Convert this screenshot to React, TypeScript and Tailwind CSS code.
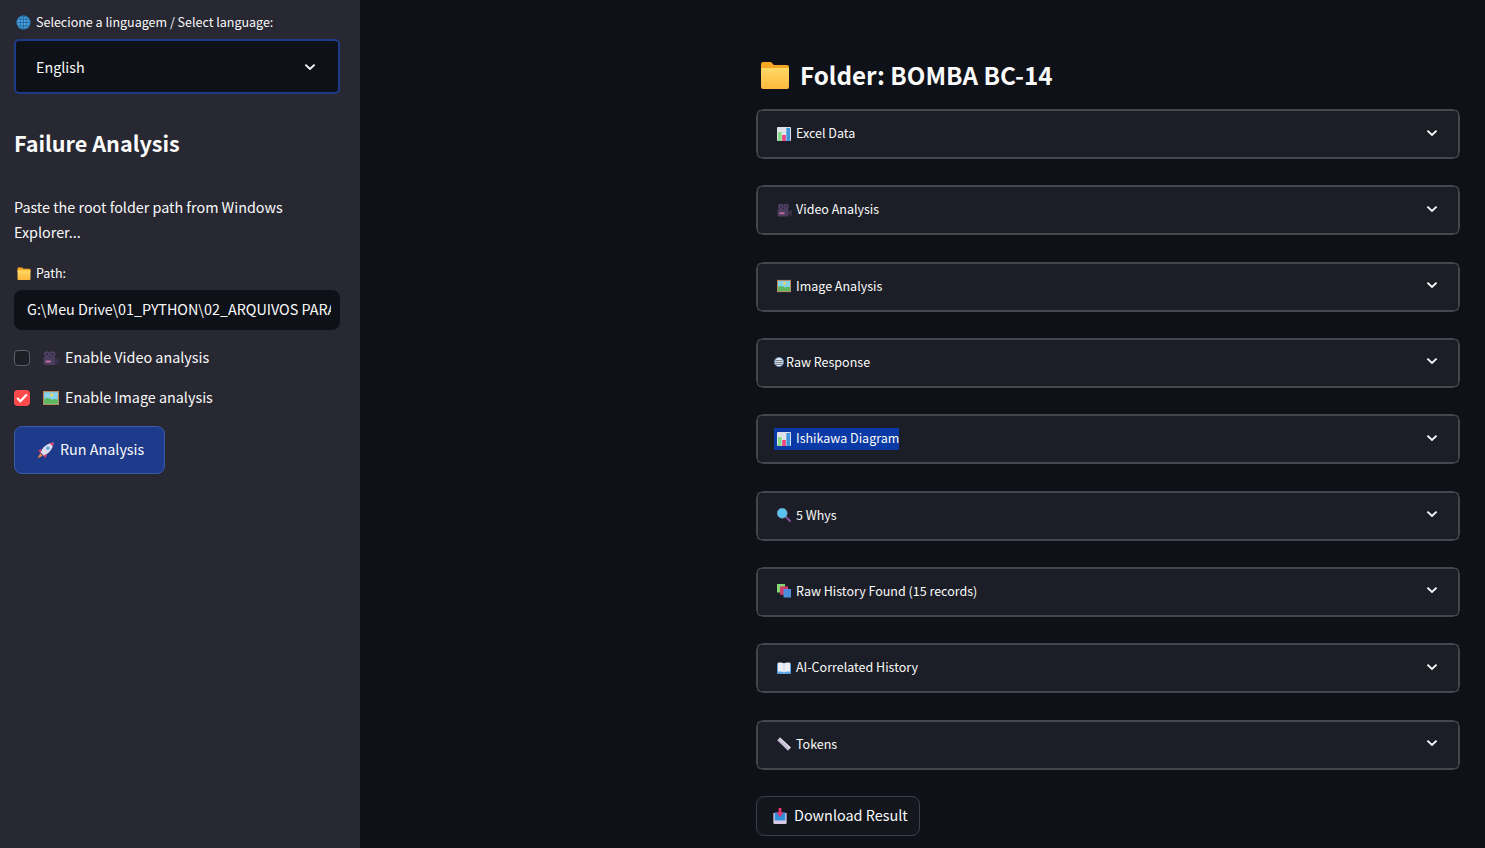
import React from "react";

type IconProps = { className?: string };

const Globe = ({ className }: IconProps) => (
  <svg viewBox="0 0 16 16" className={className}>
    <circle cx="8" cy="8" r="7.4" fill="#4aa3df" />
    <g fill="none" stroke="#1f5f93" strokeWidth="0.8">
      <circle cx="8" cy="8" r="7.2" />
      <ellipse cx="8" cy="8" rx="3.4" ry="7.2" />
      <path d="M8 1v14M1 8h14M2 4.5h12M2 11.5h12" />
    </g>
  </svg>
);

const Folder = ({ id, className }: IconProps & { id: string }) => (
  <svg viewBox="0 0 30 28" className={className}>
    <defs>
      <linearGradient id={id} x1="0" y1="0" x2="0" y2="1">
        <stop offset="0" stopColor="#ffd966" />
        <stop offset="1" stopColor="#ffb83d" />
      </linearGradient>
    </defs>
    <path d="M1 3a2 2 0 0 1 2-2h8l3 3h13a2 2 0 0 1 2 2v4H1z" fill="#f5a623" />
    <path d="M1 7h28v19a2 2 0 0 1-2 2H3a2 2 0 0 1-2-2z" fill={`url(#${id})`} />
  </svg>
);

const Chart = ({ className }: IconProps) => (
  <svg viewBox="0 0 14 14" className={className}>
    <rect x="0" y="0" width="14" height="14" rx="1" fill="#dfe2ea" />
    <rect x="1" y="5" width="3.6" height="9" fill="#84dc86" />
    <rect x="5.2" y="8" width="3.6" height="6" fill="#f0437f" />
    <rect x="9.4" y="1" width="3.6" height="13" fill="#3f95dc" />
  </svg>
);

const Camera = ({ className }: IconProps) => (
  <svg viewBox="0 0 15 14" className={className}>
    <circle cx="3.8" cy="3.4" r="2.7" fill="#4f4165" />
    <circle cx="9" cy="3.4" r="2.7" fill="#4f4165" />
    <circle cx="3.8" cy="3.4" r="1" fill="#2f2740" />
    <circle cx="9" cy="3.4" r="1" fill="#2f2740" />
    <rect x="0.6" y="6" width="11" height="7.6" rx="0.8" fill="#4b3d60" />
    <path d="M11.6 8.6L15 6.8v6.4l-3.4-1.8z" fill="#3a3049" />
    <rect x="2.4" y="9.4" width="5" height="1.8" fill="#c76f9a" />
  </svg>
);

const Picture = ({ className }: IconProps) => (
  <svg viewBox="0 0 16 14" className={className}>
    <rect width="16" height="14" fill="#b78a5e" />
    <rect x="1.2" y="1.2" width="13.6" height="11.6" fill="#86d3ee" />
    <circle cx="8.6" cy="4" r="1.5" fill="#f7d24c" />
    <path d="M1.2 8.5C4 6 7 7 9 9c2-1.4 4-1.4 5.8-.3v4.1H1.2z" fill="#5cb85c" />
  </svg>
);

const Rocket = ({ className }: IconProps) => (
  <svg viewBox="0 0 16 16" className={className}>
    <path d="M3 10.5L.6 15.4l4.9-2.4z" fill="#f58a3c" />
    <path d="M4 6.4L.8 8.4l3 1.6zM9.6 12L7.6 15.2 6 12.2z" fill="#e8356f" />
    <path d="M3.4 9.8C5 5 9 1.2 15.6.4 14.8 7 11 11 6.2 12.6z" fill="#dfdbea" />
    <path d="M12 1.2c1.1-.4 2.4-.6 3.6-.8-.1 1.2-.4 2.5-.8 3.6z" fill="#e8356f" />
    <circle cx="10.2" cy="5.8" r="1.7" fill="#5aa9e6" />
  </svg>
);

const Magnifier = ({ className }: IconProps) => (
  <svg viewBox="0 0 14 14" className={className}>
    <path d="M8 8l5 5" stroke="#7a4d8f" strokeWidth="2.2" strokeLinecap="round" />
    <circle cx="5.2" cy="5.2" r="5" fill="#58c4ee" />
    <circle cx="5.2" cy="5.2" r="5" fill="none" stroke="#8a8fb5" strokeWidth="0.6" />
  </svg>
);

const Books = ({ className }: IconProps) => (
  <svg viewBox="0 0 14 14" className={className}>
    <rect x="0" y="0" width="8" height="8.5" fill="#84d873" />
    <rect x="3" y="2.4" width="8" height="8.5" fill="#d13a6b" />
    <rect x="6.5" y="5" width="7.5" height="8.5" fill="#4b8fdc" />
  </svg>
);

const OpenBook = ({ className }: IconProps) => (
  <svg viewBox="0 0 14 12" className={className}>
    <rect x="0" y="1" width="14" height="11" rx="1" fill="#5a9fe0" />
    <path d="M1 0.8c2-.6 4.5-.4 6 .6 1.5-1 4-1.2 6-.6v9c-2-.5-4.5-.3-6 .6-1.5-.9-4-1.1-6-.6z" fill="#eef0f7" />
    <path d="M7 1.4v9" stroke="#a9b3cc" strokeWidth="0.6" />
  </svg>
);

const Ruler = ({ className }: IconProps) => (
  <svg viewBox="0 0 14 14" className={className}>
    <path d="M3 .4L13.8 10.6 11 13.8.2 3.2z" fill="#c9bfd6" />
    <path d="M3 .4L13.8 10.6 13 11.5 2.2 1.3z" fill="#e3dcea" />
  </svg>
);

const Inbox = ({ className }: IconProps) => (
  <svg viewBox="0 0 14 16" className={className}>
    <path d="M0.4 5h13.2v10a1 1 0 0 1-1 1H1.4a1 1 0 0 1-1-1z" fill="#d9c9e4" />
    <rect x="1.8" y="4.4" width="10.4" height="8" fill="#2f8fdc" />
    <path d="M5.6 0h2.8v4.6h2.2L7 9 3.4 4.6h2.2z" fill="#e8356f" />
  </svg>
);

const Chevron = ({ className }: IconProps) => (
  <svg viewBox="0 0 12 8" className={className} fill="none" stroke="currentColor" strokeWidth="1.9">
    <path d="M1.4 1.6L6 6l4.6-4.4" />
  </svg>
);

const SmallGlobe = ({ className }: IconProps) => (
  <svg viewBox="0 0 10 10" className={className}>
    <circle cx="5" cy="5" r="4.6" fill="#dfe5ee" />
    <circle cx="5" cy="5" r="4.6" fill="none" stroke="#5b8fc9" strokeWidth="0.8" />
    <path d="M1.4 3.6h7.2M1 5.6h8M2 7.4h6" stroke="#6b7078" strokeWidth="0.9" />
  </svg>
);

const rows: { label: string; icon: React.ReactNode; selected?: boolean }[] = [
  { label: "Excel Data", icon: <Chart className="w-3.5 h-3.5" /> },
  { label: "Video Analysis", icon: <Camera className="w-[15px] h-3.5" /> },
  { label: "Image Analysis", icon: <Picture className="w-3.5 h-3.5" /> },
  { label: "Raw Response", icon: <SmallGlobe className="w-2.5 h-2.5" /> },
  { label: "Ishikawa Diagram", icon: <Chart className="w-3.5 h-3.5" />, selected: true },
  { label: "5 Whys", icon: <Magnifier className="w-3.5 h-3.5" /> },
  { label: "Raw History Found (15 records)", icon: <Books className="w-3.5 h-3.5" /> },
  { label: "AI-Correlated History", icon: <OpenBook className="w-3.5 h-3" /> },
  { label: "Tokens", icon: <Ruler className="w-3.5 h-3.5" /> },
];

function Expander({ label, icon, selected }: { label: string; icon: React.ReactNode; selected?: boolean }) {
  const tiny = label === "Raw Response";
  const wide = label === "Video Analysis";
  return (
    <div className="h-[50px] mb-[26.33px] rounded-lg border border-[#45474d] bg-[#1b1e26]">
      <div className="h-full flex items-center justify-between rounded-[3px] border border-[#45474d] pl-[16px] pr-[20px] pb-px text-[12.5px] text-[#fafafa]">
        <span className={`flex items-center h-[22px] ${selected ? "bg-[#0b3aa6]" : ""} ${tiny ? "gap-[2px]" : wide ? "pl-[3px] gap-[4px]" : "pl-[3px] gap-[5px]"}`}>
          {icon}
          <span>{label}</span>
        </span>
        <Chevron className="w-3 h-2 mb-0.5" />
      </div>
    </div>
  );
}

export default function App() {
  return (
    <div className="flex h-[848px] w-full overflow-hidden bg-[#0e1117] text-[#fafafa] text-[14.35px] font-['Noto_Sans_CJK_JP','Liberation_Sans',sans-serif]">
      <aside className="w-[360px] shrink-0 bg-[#282832] pl-[14px] pr-[20px] pt-[12px]">
        <div className="flex items-center h-5 text-[12.5px] gap-[5px] pl-[2px]">
          <Globe className="w-[15px] h-[15px]" />
          <span>Selecione a linguagem / Select language:</span>
        </div>
        <div className="mt-[7px] h-[55px] flex items-center justify-between rounded-[5px] border-2 border-[#1e3a8a] bg-[#0e1117] pl-5 pr-[22px]">
          <span>English</span>
          <Chevron className="w-3 h-2" />
        </div>
        <h2 className="mt-[33px] text-[21.6px] leading-8 font-bold">Failure Analysis</h2>
        <p className="mt-[35px] leading-[25px]">Paste the root folder path from Windows Explorer...</p>
        <div className="mt-[19px] flex items-center h-5 text-[12.5px] gap-[5px] pl-[3px]">
          <Folder id="folder-small" className="w-[14px] h-[13px]" />
          <span>Path:</span>
        </div>
        <div className="mt-[7px] h-10 flex items-center rounded-lg bg-[#0e1117] pl-[13px] pr-[9px] pb-0.5">
          <span className="block overflow-hidden whitespace-nowrap">G:\Meu Drive\01_PYTHON\02_ARQUIVOS PARA</span>
        </div>
        <div className="mt-[16px] flex items-center h-6 gap-[13px]">
          <span className="w-4 h-4 rounded border border-[#5c5e66] bg-[#1d1f27]"></span>
          <Camera className="w-4 h-4" />
          <span className="-ml-[7px] pb-0.5">Enable Video analysis</span>
        </div>
        <div className="mt-4 flex items-center h-6 gap-[13px]">
          <span className="w-4 h-4 rounded bg-[#ff4b4b] flex items-center justify-center">
            <svg viewBox="0 0 12 10" className="w-3 h-2.5" fill="none" stroke="#fff" strokeWidth="2.2">
              <path d="M1.2 5l3.2 3.2L10.8 1.6" />
            </svg>
          </span>
          <Picture className="w-4 h-4" />
          <span className="-ml-[7px] pb-0.5">Enable Image analysis</span>
        </div>
        <button className="mt-[16px] h-12 w-[151px] flex items-center justify-start pl-[22px] gap-[6px] rounded-lg border border-[#3a5cab] bg-[#1e3a8a] text-[#fafafa]">
          <Rocket className="w-[17px] h-[17px]" />
          <span className="pb-0.5">Run Analysis</span>
        </button>
      </aside>
      <main className="flex-1 pl-[396px] pr-[25px] pt-[59px]">
        <div className="flex items-center h-[32px] gap-[10px] pl-[4px] mb-[18px]">
          <Folder id="folder-large" className="w-[30px] h-[28px]" />
          <h1 className="text-[24.2px] leading-8 font-semibold">Folder: BOMBA BC-14</h1>
        </div>
        {rows.map((r) => (
          <Expander key={r.label} {...r} />
        ))}
        <button className="h-10 w-[164px] flex items-center justify-start pl-[16px] gap-[7px] rounded-lg border border-[#3b3e46] bg-[#13161d] text-[#fafafa]">
          <Inbox className="w-[14px] h-4" />
          <span className="pb-0.5 text-[14.4px]">Download Result</span>
        </button>
      </main>
    </div>
  );
}
